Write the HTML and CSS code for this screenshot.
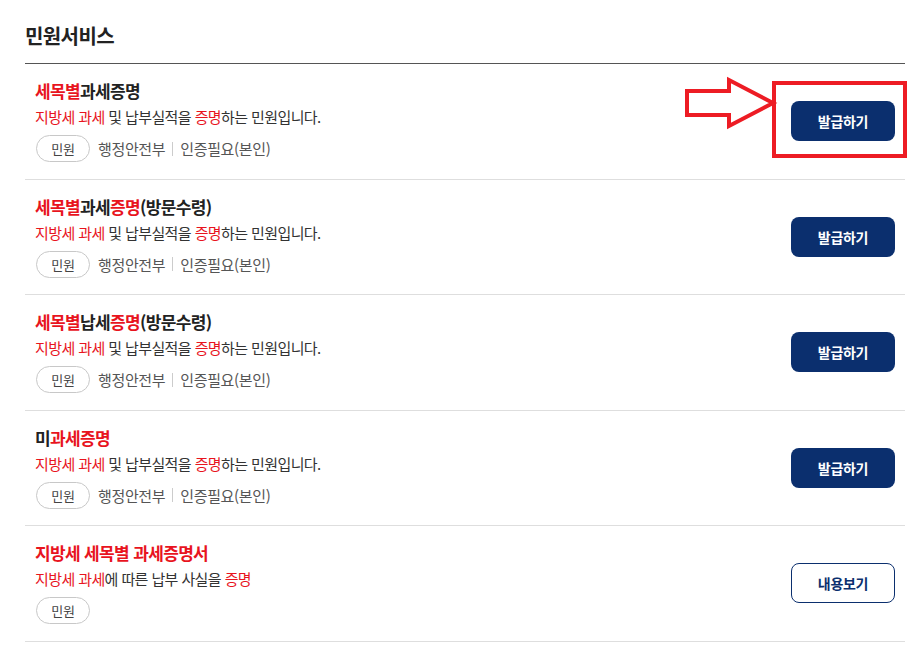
FILE: index.html
```html
<!DOCTYPE html>
<html lang="ko">
<head>
<meta charset="utf-8">
<title>민원서비스</title>
<link rel="stylesheet" href="styles.css">
</head>
<body>
<div class="wrap">
  <h2 class="heading">민원서비스</h2>
  <ul class="list">
    <li class="item">
      <div class="info">
        <p class="title"><span class="red">세목별</span>과세증명</p>
        <p class="desc"><span class="red">지방세 과세</span> 및 납부실적을 <span class="red">증명</span>하는 민원입니다.</p>
        <div class="meta"><span class="badge">민원</span><span class="org">행정안전부</span><span class="sep"></span><span class="org">인증필요(본인)</span></div>
      </div>
      <button class="btn">발급하기</button>
    </li>
    <li class="item">
      <div class="info">
        <p class="title"><span class="red">세목별</span>과세<span class="red">증명</span>(방문수령)</p>
        <p class="desc"><span class="red">지방세 과세</span> 및 납부실적을 <span class="red">증명</span>하는 민원입니다.</p>
        <div class="meta"><span class="badge">민원</span><span class="org">행정안전부</span><span class="sep"></span><span class="org">인증필요(본인)</span></div>
      </div>
      <button class="btn">발급하기</button>
    </li>
    <li class="item">
      <div class="info">
        <p class="title"><span class="red">세목별</span>납세<span class="red">증명</span>(방문수령)</p>
        <p class="desc"><span class="red">지방세 과세</span> 및 납부실적을 <span class="red">증명</span>하는 민원입니다.</p>
        <div class="meta"><span class="badge">민원</span><span class="org">행정안전부</span><span class="sep"></span><span class="org">인증필요(본인)</span></div>
      </div>
      <button class="btn">발급하기</button>
    </li>
    <li class="item">
      <div class="info">
        <p class="title">미<span class="red">과세증명</span></p>
        <p class="desc"><span class="red">지방세 과세</span> 및 납부실적을 <span class="red">증명</span>하는 민원입니다.</p>
        <div class="meta"><span class="badge">민원</span><span class="org">행정안전부</span><span class="sep"></span><span class="org">인증필요(본인)</span></div>
      </div>
      <button class="btn">발급하기</button>
    </li>
    <li class="item">
      <div class="info">
        <p class="title"><span class="red">지방세 세목별 과세증명서</span></p>
        <p class="desc"><span class="red">지방세 과세</span>에 따른 납부 사실을 <span class="red">증명</span></p>
        <div class="meta"><span class="badge">민원</span></div>
      </div>
      <button class="btn btn-outline">내용보기</button>
    </li>
  </ul>
</div>
<svg class="annot" width="240" height="90" viewBox="0 0 240 90" aria-hidden="true">
  <path d="M3 16 H45 V5 L89 28 L45 51 V40 H3 Z" fill="none" stroke="#ed1c24" stroke-width="4" stroke-linejoin="miter"/>
  <rect x="90" y="8" width="131" height="73" fill="none" stroke="#ed1c24" stroke-width="4"/>
</svg>
</body>
</html>
```
FILE: styles.css
```css
* { box-sizing: border-box; }
body {
  margin: 0;
  background: #fff;
  font-family: "Noto Sans CJK KR", "Noto Sans", sans-serif;
  color: #222;
  position: relative;
}
.wrap {
  width: 905px;
  padding: 16px 0 0 25px;
}
.heading {
  margin: 0 0 7px;
  font-size: 20px;
  line-height: 40px;
  font-weight: 700;
  letter-spacing: -0.6px;
  color: #222;
}
.list {
  list-style: none;
  margin: 0;
  padding: 0;
  border-top: 1px solid #555;
}
.item {
  display: flex;
  align-items: center;
  justify-content: space-between;
  height: 115.5px;
  padding: 0 10px;
  border-bottom: 1px solid #dedede;
}
.info {
  display: flex;
  flex-direction: column;
}
.title {
  margin: 0;
  font-size: 17px;
  line-height: 22px;
  font-weight: 700;
  letter-spacing: -0.65px;
  color: #222;
}
.desc {
  margin: 5px 0 0;
  font-size: 15px;
  line-height: 20px;
  letter-spacing: -0.6px;
  color: #333;
}
.red { color: #e8141e; }
.meta {
  display: flex;
  align-items: center;
  margin-top: 8px;
  height: 27px;
}
.badge {
  display: inline-flex;
  align-items: center;
  justify-content: center;
  width: 54px;
  height: 27px;
  border: 1px solid #c8c8c8;
  border-radius: 14px;
  font-size: 13px;
  letter-spacing: -0.3px;
  color: #444;
  margin: 0 8px 0 1px;
}
.org {
  font-size: 15px;
  color: #555;
  letter-spacing: -0.35px;
}
.sep {
  width: 1px;
  height: 14px;
  background: #ccc;
  margin: 0 7px;
}
.btn {
  width: 104px;
  height: 40px;
  border: 0;
  border-radius: 8px;
  background: #0b2f6e;
  color: #fff;
  font-family: inherit;
  font-size: 14px;
  font-weight: 700;
  letter-spacing: -0.3px;
}
.btn-outline {
  background: #fff;
  color: #0b2f6e;
  border: 1.5px solid #0b2f6e;
}
.annot {
  position: absolute;
  left: 684px;
  top: 75px;
}
```
